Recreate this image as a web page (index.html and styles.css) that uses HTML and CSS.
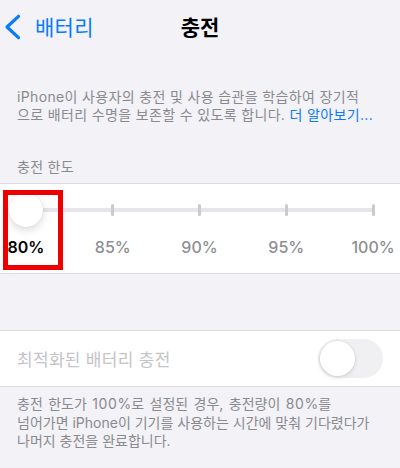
FILE: index.html
```html
<!DOCTYPE html>
<html lang="ko">
<head>
<meta charset="utf-8">
<link rel="stylesheet" href="styles.css">
</head>
<body>
<div class="screen">
  <header class="nav">
    <div class="back">
      <svg class="chev" width="20" height="26" viewBox="0 0 20 26"><polyline points="15.5,2.3 4,13 15.5,23.7" fill="none" stroke="#0a7aff" stroke-width="3.2" stroke-linecap="round" stroke-linejoin="round"/></svg>
      <span class="back-text">배터리</span>
    </div>
    <div class="title">충전</div>
    <div></div>
  </header>

  <p class="desc">iPhone이 사용자의 충전 및 사용 습관을 학습하여 장기적<br>으로 배터리 수명을 보존할 수 있도록 합니다. <span class="link">더 알아보기...</span></p>

  <div class="group-header">충전 한도</div>

  <section class="group slider-group">
    <div class="slider">
      <div class="track">
        <span class="tick"></span><span class="tick"></span><span class="tick"></span><span class="tick"></span><span class="tick"></span>
      </div>
      <div class="knob"></div>
    </div>
    <div class="labels">
      <span class="lbl active">80%</span>
      <span class="lbl">85%</span>
      <span class="lbl">90%</span>
      <span class="lbl">95%</span>
      <span class="lbl">100%</span>
    </div>
    <div class="highlight"></div>
  </section>

  <section class="group toggle-group">
    <span class="row-label">최적화된 배터리 충전</span>
    <span class="toggle"><span class="toggle-knob"></span></span>
  </section>

  <p class="footer"><span class="first-line">충전 한도가 <span class="num">100</span>%로 설정된 경우, 충전량이 <span class="num">80</span>%를</span><br>넘어가면 iPhone이 기기를 사용하는 시간에 맞춰 기다렸다가<br>나머지 충전을 완료합니다.</p>
</div>
</body>
</html>
```

FILE: styles.css
```css
html, body {
  margin: 0;
  padding: 0;
  background: #f2f2f7;
}
.screen {
  width: 400px;
  height: 468px;
  overflow: hidden;
  font-family: Inter, "Noto Sans CJK KR", sans-serif;
  color: #000;
}
.nav {
  height: 50px;
  box-sizing: border-box;
  padding-top: 6px;
  display: grid;
  grid-template-columns: 1fr auto 1fr;
  align-items: center;
}
.back {
  display: flex;
  align-items: center;
  padding-left: 3px;
  gap: 12px;
  color: #0a7aff;
}
.chev {
  display: block;
  margin-top: -2px;
}
.back-text {
  font-size: 21px;
  line-height: 24px;
  letter-spacing: 0.3px;
}
.title {
  font-size: 21px;
  font-weight: 700;
  line-height: 24px;
}
.desc {
  margin: 38px 0 0;
  padding: 0 17px;
  font-size: 14px;
  line-height: 18px;
  letter-spacing: 0.35px;
  color: #8a8a8e;
  white-space: nowrap;
}
.link {
  color: #0a7aff;
}
.group-header {
  margin-top: 34px;
  padding: 0 17px;
  font-size: 14px;
  line-height: 18px;
  letter-spacing: 0.3px;
  color: #8a8a8e;
}
.group {
  background: #fff;
  border-top: 1px solid #dcdce0;
  border-bottom: 1px solid #dcdce0;
}
.slider-group {
  margin-top: 7px;
  position: relative;
  padding: 20px 0 16px;
}
.slider {
  position: relative;
  margin: 0 25px 0 24px;
}
.track {
  height: 12px;
  display: flex;
  justify-content: space-between;
  align-items: center;
  background: linear-gradient(#e5e5ea, #e5e5ea) center / 100% 4px no-repeat;
}
.tick {
  width: 3px;
  height: 12px;
  border-radius: 1.5px;
  background: #c9c9ce;
}
.knob {
  position: absolute;
  left: -15px;
  top: -11px;
  width: 34px;
  height: 34px;
  border-radius: 50%;
  background: #fff;
  box-shadow: 0 3px 8px rgba(0, 0, 0, 0.15), 0 0 0 0.5px rgba(0, 0, 0, 0.05);
}
.labels {
  margin: 21px 27px 0 26px;
  display: flex;
  justify-content: space-between;
}
.lbl {
  width: 0;
  display: flex;
  justify-content: center;
  white-space: nowrap;
  font-size: 16px;
  line-height: 20px;
  font-weight: 500;
  color: #8e8e93;
}
.lbl.active {
  color: #000;
  font-weight: 600;
}
.highlight {
  position: absolute;
  left: 3px;
  top: 6px;
  width: 50px;
  height: 70px;
  border: 5px solid #ee0000;
}
.toggle-group {
  margin-top: 56px;
  height: 55px;
  display: flex;
  align-items: center;
  justify-content: space-between;
  padding: 0 17px;
}
.row-label {
  font-size: 17px;
  letter-spacing: 0.3px;
  color: #c4c4c7;
}
.toggle {
  width: 65px;
  height: 39px;
  border-radius: 20px;
  background: #f0f0f2;
  display: flex;
  align-items: center;
  padding-left: 2px;
  box-sizing: border-box;
}
.toggle-knob {
  width: 35px;
  height: 35px;
  border-radius: 50%;
  background: #fff;
  box-shadow: 0 2px 5px rgba(0, 0, 0, 0.1), 0 0 0 1px rgba(0, 0, 0, 0.04);
}
.footer {
  margin: 8px 0 0;
  padding: 0 17px;
  font-size: 14px;
  line-height: 18.5px;
  color: #8a8a8e;
  white-space: nowrap;
}
.first-line {
  word-spacing: 1.5px;
}
.num {
  letter-spacing: 0.6px;
}
```
